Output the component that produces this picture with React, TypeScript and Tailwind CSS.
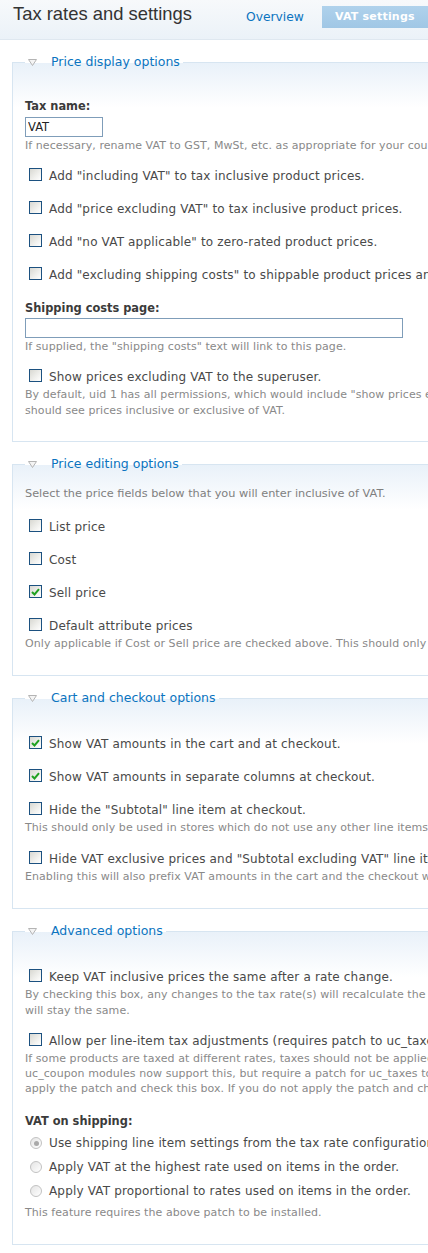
import React from 'react'

function Arrow() {
  return (
    <svg width="9" height="7" viewBox="0 0 9 7" className="shrink-0">
      <path d="M0.5 0.5 H8.5 L4.5 6.5 Z" fill="#f4f4f4" stroke="#b4b4b4" />
    </svg>
  )
}

function Fieldset({ title, className = '', children }: { title: string; className?: string; children: React.ReactNode }) {
  return (
    <div className={`relative ml-[12px] border border-[#d7e5f1] bg-[linear-gradient(#e9f1f9,#ffffff_45px)] pl-[12px] ${className}`}>
      <div className="absolute -top-[9px] left-[12px] flex h-4 items-center bg-[linear-gradient(#ffffff_9px,transparent_9px)] px-[3px]">
        <Arrow />
        <span className="ml-[14px] text-[12.5px] leading-4 text-[#0b74c0]">{title}</span>
      </div>
      {children}
    </div>
  )
}

function Check({ label, checked = false, className = '' }: { label: string; checked?: boolean; className?: string }) {
  return (
    <div className={`flex h-4 items-start whitespace-nowrap pl-[4px] ${className}`}>
      <span className="flex h-[13px] w-[13px] shrink-0 items-center justify-center border border-[#1c5180] bg-[linear-gradient(135deg,#d8d8d2,#f1f1ee_60%,#ffffff)]">
        {checked && (
          <svg width="9" height="8" viewBox="0 0 9 8">
            <path d="M1 4 L3.5 6.5 L8 1.2" fill="none" stroke="#21a121" strokeWidth="2" />
          </svg>
        )}
      </span>
      <span className="ml-[7px] text-[12px] leading-4 tracking-[0.16px] text-[#494949]">{label}</span>
    </div>
  )
}

function Radio({ label, selected = false, className = '' }: { label: string; selected?: boolean; className?: string }) {
  return (
    <div className={`flex h-4 items-center whitespace-nowrap pl-[5px] ${className}`}>
      <span className="flex h-[12px] w-[12px] shrink-0 items-center justify-center rounded-full border border-[#c2c2c2] bg-[linear-gradient(135deg,#e4e4e4,#ffffff)]">
        {selected && <span className="h-[5px] w-[5px] rounded-full bg-[#a9a9a9]" />}
      </span>
      <span className="ml-[7px] text-[12px] leading-4 tracking-[0.16px] text-[#494949]">{label}</span>
    </div>
  )
}

function Desc({ lines, className = '' }: { lines: string[]; className?: string }) {
  return (
    <div className={`whitespace-nowrap text-[11px] leading-4 tracking-[0.07px] text-[#898989] ${className}`}>
      {lines.map((l) => (
        <div key={l}>{l}</div>
      ))}
    </div>
  )
}

function Label({ text, className = '' }: { text: string; className?: string }) {
  return <div className={`text-[11.4px] font-bold leading-4 text-[#3b3b3b] ${className}`}>{text}</div>
}

export default function App() {
  return (
    <div className="h-[1253px] w-[428px] overflow-hidden bg-white font-['DejaVu_Sans',Verdana,sans-serif]">
      <div className="w-[760px]">
        <div className="flex h-[40px] border-b border-[#dfe8f0] bg-[linear-gradient(#f7f9fb,#ebf2f8)]">
          <h1 className="w-[246px] shrink-0 pl-[13px] pt-[2px] font-['Liberation_Sans',Arial,sans-serif] text-[18.4px] leading-[24px] text-[#333]">
            Tax rates and settings
          </h1>
          <a className="mt-[9px] w-[76px] shrink-0 text-[12.3px] leading-4 text-[#0b74c0]">Overview</a>
          <div className="mt-[6px] flex h-[22px] items-center bg-[linear-gradient(#afd2ec,#a0c7e5)] px-[13px] text-[11px] font-bold tracking-[0.2px] text-white">
            VAT settings
          </div>
        </div>

        <Fieldset title="Price display options" className="mt-[22px] pb-[22px]">
          <Label text="Tax name:" className="mt-[35px]" />
          <input
            readOnly
            value="VAT"
            className="mt-[3px] block h-[20px] w-[78px] border border-[#7f9db9] bg-white pl-[2px] text-[11.5px] text-[#222] outline-none"
          />
          <Desc className="mt-[1px]" lines={['If necessary, rename VAT to GST, MwSt, etc. as appropriate for your country.']} />
          <Check className="mt-[14px]" label={'Add "including VAT" to tax inclusive product prices.'} />
          <Check className="mt-[17px]" label={'Add "price excluding VAT" to tax inclusive product prices.'} />
          <Check className="mt-[17px]" label={'Add "no VAT applicable" to zero-rated product prices.'} />
          <Check className="mt-[17px]" label={'Add "excluding shipping costs" to shippable product prices and shipping rates.'} />
          <Label text="Shipping costs page:" className="mt-[17px]" />
          <input
            readOnly
            value=""
            className="mt-[2px] block h-[20px] w-[378px] border border-[#7f9db9] bg-white pl-[2px] text-[11.5px] outline-none"
          />
          <Desc className="mt-[1px]" lines={['If supplied, the "shipping costs" text will link to this page.']} />
          <Check className="mt-[14px]" label="Show prices excluding VAT to the superuser." />
          <Desc
            className="mt-[2px]"
            lines={[
              'By default, uid 1 has all permissions, which would include "show prices excluding VAT". This setting decides whether the superuser',
              'should see prices inclusive or exclusive of VAT.',
            ]}
          />
        </Fieldset>

        <Fieldset title="Price editing options" className="mt-[22px] pb-[23px]">
          <div className="mt-[21px] whitespace-nowrap text-[11.3px] leading-4 text-[#808080]">
            Select the price fields below that you will enter inclusive of VAT.
          </div>
          <Check className="mt-[17px]" label="List price" />
          <Check className="mt-[17px]" label="Cost" />
          <Check className="mt-[17px]" label="Sell price" checked />
          <Check className="mt-[17px]" label="Default attribute prices" />
          <Desc
            className="mt-[2px]"
            lines={['Only applicable if Cost or Sell price are checked above. This should only be used if attribute prices include VAT.']}
          />
        </Fieldset>

        <Fieldset title="Cart and checkout options" className="mt-[22px] pb-[23px]">
          <Check className="mt-[37px]" label="Show VAT amounts in the cart and at checkout." checked />
          <Check className="mt-[17px]" label="Show VAT amounts in separate columns at checkout." checked />
          <Check className="mt-[17px]" label={'Hide the "Subtotal" line item at checkout.'} />
          <Desc className="mt-[2px]" lines={['This should only be used in stores which do not use any other line items.']} />
          <Check className="mt-[15px]" label={'Hide VAT exclusive prices and "Subtotal excluding VAT" line items.'} />
          <Desc
            className="mt-[2px]"
            lines={['Enabling this will also prefix VAT amounts in the cart and the checkout with "incl." text.']}
          />
        </Fieldset>

        <Fieldset title="Advanced options" className="mt-[22px] pb-[23px]">
          <Check className="mt-[37px]" label="Keep VAT inclusive prices the same after a rate change." />
          <Desc
            className="mt-[2px]"
            lines={[
              'By checking this box, any changes to the tax rate(s) will recalculate the VAT exclusive prices so that the inclusive prices',
              'will stay the same.',
            ]}
          />
          <Check className="mt-[14px]" label="Allow per line-item tax adjustments (requires patch to uc_taxes)." />
          <Desc
            className="mt-[2px] leading-[15px]"
            lines={[
              'If some products are taxed at different rates, taxes should not be applied to the order total. The uc_discounts and',
              'uc_coupon modules now support this, but require a patch for uc_taxes to work correctly. If you use these modules,',
              'apply the patch and check this box. If you do not apply the patch and check this box, taxes will not be calculated.',
            ]}
          />
          <Label text="VAT on shipping:" className="mt-[17px]" />
          <Radio className="mt-[6px]" label="Use shipping line item settings from the tax rate configuration." selected />
          <Radio className="mt-[8px]" label="Apply VAT at the highest rate used on items in the order." />
          <Radio className="mt-[8px]" label="Apply VAT proportional to rates used on items in the order." />
          <Desc className="mt-[6px]" lines={['This feature requires the above patch to be installed.']} />
        </Fieldset>
      </div>
    </div>
  )
}
